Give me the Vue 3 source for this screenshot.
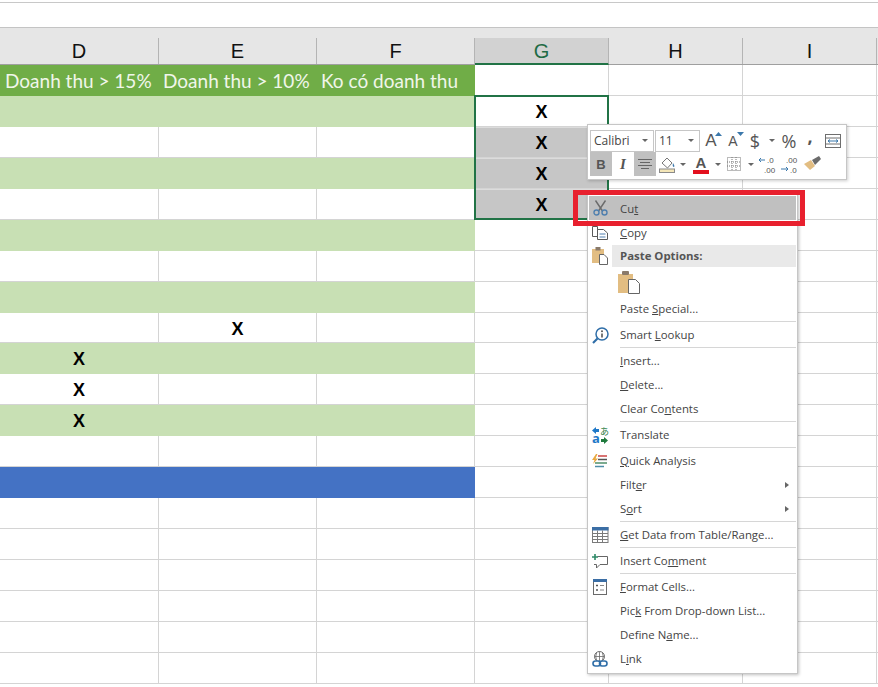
<template>
  <div class="page">
    <div class="topbar"></div>

    <div class="col-heads">
      <div v-for="c in columns" :key="c" class="col-head" :class="{ active: c === 'G' }">{{ c === 'J' ? '' : c }}</div>
    </div>

    <div class="grid">
      <div v-for="(row, r) in rows" :key="r" class="grid-row">
        <div
          v-for="(c, i) in columns"
          :key="c"
          class="cell"
          :class="cellClass(row, c, i)"
        >{{ cellText(row, c) }}</div>
      </div>
    </div>

    <!-- seleccion G2:G5 -->
    <div class="selection"></div>

    <!-- mini toolbar -->
    <div class="mini-bar">
      <div class="mini-row">
        <div class="combo font-name"><span>Calibri</span><i class="caret"></i></div>
        <div class="combo font-size"><span>11</span><i class="caret"></i></div>
        <div class="tool w22"><span class="big-a">A</span><svg width="7" height="5" class="tick"><path d="M0 4 L3.5 0 L7 4Z" fill="#3b78ab"/></svg></div>
        <div class="tool w22"><span class="small-a">A</span><svg width="7" height="5" class="tick"><path d="M0 0 L3.5 4 L7 0Z" fill="#3b78ab"/></svg></div>
        <div class="tool w22 sym">$</div>
        <i class="caret c-dollar"></i>
        <div class="tool w22 sym">%</div>
        <div class="tool w20 sym comma">,</div>
        <div class="tool w22 wrap-btn">
          <svg width="16" height="16" viewBox="0 0 16 16" fill="none" stroke="#6e6e6e"><rect x="0.5" y="1.5" width="15" height="13"/><path d="M0.5 5H15.5M0.5 11H15.5"/><path d="M3 8H13" stroke="#3b78ab"/><path d="M5 6.5L3 8L5 9.5M11 6.5L13 8L11 9.5" stroke="#3b78ab"/></svg>
        </div>
      </div>
      <div class="mini-row">
        <div class="tool btn-on w22 bold-b">B</div>
        <div class="tool w22 ital">I</div>
        <div class="tool btn-on w22">
          <svg width="14" height="12" viewBox="0 0 14 12" stroke="#666"><path d="M0 1.5H14M2 4.5H12M0 7.5H14M3 10.5H11"/></svg>
        </div>
        <div class="tool w22">
          <svg width="17" height="17" viewBox="0 0 17 17" fill="none"><path d="M3 7L8 2L13 7L8.500 12Z" stroke="#777" fill="#fff"/><path d="M14 7Q16 10 15 11Q13 11 14 7Z" fill="#3b78ab"/><rect x="0.500" y="13" width="15" height="3.500" stroke="#8a8a8a" fill="#f4e6b8"/></svg>
        </div>
        <i class="caret c-fill"></i>
        <div class="tool w22 color-a"><span>A</span><b></b></div>
        <i class="caret c-color"></i>
        <div class="tool w22">
          <svg width="14" height="14" viewBox="0 0 14 14" fill="none" stroke="#777" stroke-dasharray="1 1"><rect x="0.500" y="0.500" width="13" height="13"/><path d="M0 5H14M0 9H14M5 0V14M9 0V14"/></svg>
        </div>
        <i class="caret c-border"></i>
        <div class="tool w22">
          <svg width="20" height="19" viewBox="0 0 20 19"><text x="9" y="8" class="dec">.0</text><text x="6" y="17.500" class="dec">.00</text><path d="M7 5H1M3 3L1 5L3 7" fill="none" stroke="#3b78ab"/></svg>
        </div>
        <div class="tool w22">
          <svg width="20" height="19" viewBox="0 0 20 19"><text x="6" y="8" class="dec">.00</text><text x="10" y="17.500" class="dec">.0</text><path d="M1 14H8M6 12L8 14L6 16" fill="none" stroke="#3b78ab"/></svg>
        </div>
        <div class="tool w22 brush">
          <svg width="18" height="16" viewBox="0 0 18 16"><path d="M0 8L7 4L11 10L6 14Z" fill="#e2bd82"/><path d="M8 4L15 0L17 3L11 9Z" fill="#6b6b6b"/></svg>
        </div>
      </div>
    </div>

    <!-- menu contextual -->
    <div class="menu">
      <template v-for="(item, n) in menu" :key="n">
        <div v-if="item.sep" class="sep"></div>
        <div v-else-if="item.header" class="item item-head">
          <span class="ico">
            <svg width="18" height="18" viewBox="0 0 18 18"><rect x="1" y="2" width="12" height="14" fill="#e2bd82"/><rect x="4.500" y="0" width="5" height="3.500" fill="#8a7a6a"/><path d="M8.500 7.500H13L16.500 11V17.500H8.500Z" fill="#fff" stroke="#666"/></svg>
          </span>
          <span class="head-text">{{ item.header }}</span>
        </div>
        <div v-else-if="item.paste" class="item item-paste">
          <svg width="22" height="23" viewBox="0 0 22 23"><rect x="0" y="3" width="15" height="19" fill="#e2bd82"/><rect x="4" y="0" width="7" height="4" rx="1" fill="#8a7a6a"/><path d="M10.500 8.500H17.500L21.500 12.500V22.500H10.500Z" fill="#fff" stroke="#666"/></svg>
        </div>
        <div v-else class="item" :class="{ hot: item.hot }">
          <span class="ico">
            <svg v-if="item.icon === 'cut'" width="15" height="16" viewBox="0 0 15 16" fill="none"><path d="M2.500 0.500L9.500 11M12.500 0.500L5.500 11" stroke="#6b6b6b" stroke-width="1.400"/><circle cx="3.500" cy="12.500" r="2.500" stroke="#4f7fae" stroke-width="1.400"/><circle cx="11.500" cy="12.500" r="2.500" stroke="#4f7fae" stroke-width="1.400"/></svg>
            <svg v-else-if="item.icon === 'copy'" width="16" height="14" viewBox="0 0 16 14" fill="none" stroke="#5a5a5a"><path d="M0.500 0.500H5.500V10.500H0.500Z"/><path d="M5.500 3.500H11.500L15.500 7V13.500H5.500Z" fill="#fff"/><path d="M7.500 8H13.500M7.500 11H13.500" stroke="#4f7fae"/></svg>
            <svg v-else-if="item.icon === 'lookup'" width="17" height="17" viewBox="0 0 17 17" fill="none"><circle cx="10" cy="7" r="6" stroke="#2f6ea8" stroke-width="1.500"/><path d="M5.500 11.500L1 16" stroke="#2f6ea8" stroke-width="2.200"/><path d="M10 6.500V10.500" stroke="#555" stroke-width="1.600"/><circle cx="10" cy="4.300" r="1" fill="#555"/></svg>
            <svg v-else-if="item.icon === 'translate'" width="17" height="17" viewBox="0 0 17 17"><text x="0" y="16" class="tr-a">a</text><text x="8" y="8" class="tr-j">あ</text><path d="M0 3.500L4 0V2H7V5H4V7Z" fill="#1f78c8"/><path d="M16 13.500L12 17V15H9V12H12V10Z" fill="#1f7a3d"/></svg>
            <svg v-else-if="item.icon === 'quick'" width="16" height="14" viewBox="0 0 16 14"><path d="M4 0L0 6H2.500L1 10L6 4.500H3.500L5.500 0Z" fill="#e9a840"/><path d="M6 2H15" stroke="#c44" stroke-width="1.500"/><path d="M6 5.500H15" stroke="#555" stroke-width="1.500"/><path d="M3 9H15" stroke="#4f8f6a" stroke-width="1.500"/><path d="M3 12.500H12" stroke="#4f8fa8" stroke-width="1.500"/></svg>
            <svg v-else-if="item.icon === 'table'" width="17" height="16" viewBox="0 0 17 16" fill="none" stroke="#7a7a7a"><rect x="0.500" y="0.500" width="15.500" height="15" fill="#fff"/><rect x="0" y="0" width="16.500" height="3.500" fill="#3b6ea5" stroke="none"/><path d="M0.500 6.500H16M0.500 9.500H16M0.500 12.500H16M5.500 3.500V15.500M10.500 3.500V15.500"/></svg>
            <svg v-else-if="item.icon === 'comment'" width="16" height="15" viewBox="0 0 16 15" fill="none"><path d="M5.500 2.500H15.500V10.500H8L4.500 14V10.500H2" stroke="#666"/><path d="M0 3H6M3 0V6" stroke="#2f8a68" stroke-width="1.600"/></svg>
            <svg v-else-if="item.icon === 'format'" width="14" height="16" viewBox="0 0 14 16" fill="none"><rect x="0.500" y="0.500" width="13" height="15" stroke="#6a6a6a" fill="#fff"/><rect x="0" y="0" width="14" height="3" fill="#3b6ea5"/><path d="M3 6.500H5M3 11H5" stroke="#555" stroke-width="1.500"/><path d="M7 6.500H11M7 11H11" stroke="#888"/></svg>
            <svg v-else-if="item.icon === 'link'" width="16" height="16" viewBox="0 0 16 16" fill="none"><circle cx="7.500" cy="5.500" r="5" stroke="#6a6a6a"/><path d="M2.500 5.500H12.500M7.500 .5V10.500M4.500 2Q3 5.500 4.500 9M10.500 2Q12 5.500 10.500 9" stroke="#6a6a6a" stroke-width=".8"/><rect x="1" y="10" width="7.500" height="5" rx="2.500" stroke="#2f6ea8" stroke-width="1.600" fill="#fff"/><rect x="7.500" y="10" width="7.500" height="5" rx="2.500" stroke="#2f6ea8" stroke-width="1.600"/></svg>
          </span>
          <span class="label">{{ item.a }}<u>{{ item.u }}</u>{{ item.b }}</span>
          <i v-if="item.sub" class="arrow"></i>
        </div>
      </template>
    </div>

    <!-- recuadro rojo sobre Cut -->
    <div class="red-box"></div>
  </div>
</template>

<script setup>
const columns = ['D', 'E', 'F', 'G', 'H', 'I', 'J']

// Cada fila: tipo de fondo y las X que lleva
const rows = [
  { kind: 'head' },
  { kind: 'band', x: ['G'] },
  { kind: 'plain', x: ['G'], sel: true },
  { kind: 'band', x: ['G'], sel: true },
  { kind: 'plain', x: ['G'], sel: true },
  { kind: 'band' },
  { kind: 'plain' },
  { kind: 'band' },
  { kind: 'plain', x: ['E'] },
  { kind: 'band', x: ['D'] },
  { kind: 'plain', x: ['D'] },
  { kind: 'band', x: ['D'] },
  { kind: 'plain' },
  { kind: 'blue' },
  { kind: 'plain' },
  { kind: 'plain' },
  { kind: 'plain' },
  { kind: 'plain' },
  { kind: 'plain' },
  { kind: 'plain' }
]

const titles = { D: 'Doanh thu > 15%', E: 'Doanh thu > 10%', F: 'Ko có doanh thu' }

const cellClass = (row, c, i) => {
  const painted = i < 3
  return {
    'is-head': painted && row.kind === 'head',
    'is-band': painted && row.kind === 'band',
    'is-blue': painted && row.kind === 'blue',
    'is-sel': row.sel && c === 'G',
    [`col-${c}`]: true
  }
}

const cellText = (row, c) => {
  if (row.kind === 'head') return titles[c] || ''
  return row.x && row.x.includes(c) ? 'X' : ''
}

const menu = [
  { a: 'Cu', u: 't', b: '', icon: 'cut', hot: true },
  { a: '', u: 'C', b: 'opy', icon: 'copy' },
  { header: 'Paste Options:' },
  { paste: true },
  { a: 'Paste ', u: 'S', b: 'pecial...' },
  { sep: true },
  { a: 'Smart ', u: 'L', b: 'ookup', icon: 'lookup' },
  { sep: true },
  { a: '', u: 'I', b: 'nsert...' },
  { a: '', u: 'D', b: 'elete...' },
  { a: 'Clear Co', u: 'n', b: 'tents' },
  { sep: true },
  { a: 'Translate', u: '', b: '', icon: 'translate' },
  { sep: true },
  { a: '', u: 'Q', b: 'uick Analysis', icon: 'quick' },
  { a: 'Filt', u: 'e', b: 'r', sub: true },
  { a: 'S', u: 'o', b: 'rt', sub: true },
  { sep: true },
  { a: '', u: 'G', b: 'et Data from Table/Range...', icon: 'table' },
  { sep: true },
  { a: 'Insert Co', u: 'm', b: 'ment', icon: 'comment' },
  { sep: true },
  { a: '', u: 'F', b: 'ormat Cells...', icon: 'format' },
  { a: 'Pic', u: 'k', b: ' From Drop-down List...' },
  { a: 'Define N', u: 'a', b: 'me...' },
  { a: 'L', u: 'i', b: 'nk', icon: 'link' }
]
</script>

<style>
html, body {
  margin: 0;
  background: #fff;
  overflow: hidden;
}
</style>

<style scoped>
.page {
  position: relative;
  width: 878px;
  height: 687px;
  overflow: hidden;
  background: #fff;
  font-family: "Liberation Sans", Arial, sans-serif;
}

svg {
  overflow: visible;
}

.topbar {
  height: 24px;
  margin-top: 2px;
  border-top: 1px solid #c8c8c8;
}

.col-heads {
  display: flex;
  height: 38px;
  box-sizing: border-box;
  padding: 10px 0 0;
  background: #e6e6e6;
  border-top: 1px solid #c4c4c4;
  border-bottom: 1px solid #9f9f9f;
}

.col-head {
  flex: none;
  width: 134px;
  box-sizing: border-box;
  border-right: 1px solid #b4b4b4;
  text-align: center;
  font-size: 20px;
  line-height: 26px;
  color: #111;
}

.col-head:nth-child(-n+3) {
  width: 158px;
}

.col-head:first-child {
  width: 159px;
}

.col-head.active {
  background: #d2d2d2;
  color: #1f6b45;
  height: 27px;
  border-bottom: 2px solid #217346;
}

.grid-row {
  display: flex;
  height: 30.95px;
}

.cell {
  flex: none;
  width: 134px;
  box-sizing: border-box;
  border-right: 1px solid #d4d4d4;
  border-bottom: 1px solid #d4d4d4;
  text-align: center;
  font-size: 18px;
  font-weight: 700;
  line-height: 32px;
  color: #000;
}

.col-D, .col-E, .col-F {
  width: 158px;
}

.col-D {
  width: 159px;
}

.is-head {
  padding-left: 4px;
  text-align: left;
  background: #70ad47;
  border-color: #70ad47;
  color: #f0f6ea;
  font-family: Lato, "Liberation Sans", sans-serif;
  font-size: 19px;
  font-weight: 400;
  white-space: nowrap;
}

.is-head.col-D {
  padding-left: 5px;
}

.is-band {
  background: #c8e0b4;
  border-color: #c8e0b4;
}

.is-blue {
  background: #4472c4;
  border-color: #4472c4;
}

.is-sel {
  background: #c6c6c6;
  box-shadow: inset 0 1px 0 #dcdcdc;
}

.selection {
  position: absolute;
  left: 474px;
  top: 95px;
  width: 131px;
  height: 121px;
  border: 2px solid #217346;
}

.mini-bar {
  position: absolute;
  left: 587px;
  top: 124px;
  width: 260px;
  height: 56px;
  box-sizing: border-box;
  padding: 4px 2px;
  background: #fff;
  border: 1px solid #c6c6c6;
  box-shadow: 1px 1px 3px rgba(0, 0, 0, 0.2);
}

.mini-row {
  display: flex;
  align-items: center;
  height: 23px;
}

.mini-row + .mini-row {
  height: 24px;
}

.combo {
  flex: none;
  display: flex;
  align-items: center;
  justify-content: space-between;
  box-sizing: border-box;
  height: 22px;
  padding: 0 5px 0 3px;
  border: 1px solid #c6c6c6;
  font-family: "Open Sans", sans-serif;
  font-size: 12px;
  color: #444;
}

.font-name {
  width: 64px;
}

.font-size {
  width: 45px;
  margin-left: 1px;
}

.caret {
  display: block;
  flex: none;
  width: 0;
  height: 0;
  border-left: 3px solid transparent;
  border-right: 3px solid transparent;
  border-top: 3px solid #666;
}

.c-dollar {
  margin: 0 3.5px 0 2.5px;
}

.c-fill {
  margin: 0 4px 0 2px;
}

.c-color {
  margin: 0 2px 0 3px;
}

.c-border {
  margin: 0 3px 0 3px;
}

.tool {
  flex: none;
  display: flex;
  align-items: center;
  justify-content: center;
  position: relative;
  height: 24px;
  color: #555;
}

.w20 { width: 20px; }
.w22 { width: 22px; }

.wrap-btn {
  margin-left: 2px;
}

.brush {
  margin-left: 1px;
}

.big-a {
  font-size: 17px;
}

.small-a {
  font-size: 14px;
}

.tick {
  position: absolute;
  right: 0;
  top: 3px;
}

.sym {
  font-family: "Open Sans", sans-serif;
  font-size: 18px;
}

.comma {
  font-weight: 700;
  padding-bottom: 10px;
  box-sizing: border-box;
}

.btn-on {
  background: #c0c0c0;
}

.bold-b {
  font-weight: 700;
  font-size: 13px;
}

.ital {
  font-family: "Liberation Serif", serif;
  font-style: italic;
  font-weight: 700;
  font-size: 15px;
}

.color-a {
  flex-direction: column;
  font-size: 15px;
  font-weight: 700;
  line-height: 15px;
}

.color-a b {
  display: block;
  width: 16px;
  height: 4px;
  background: #e3101e;
}

.dec {
  font-family: "Liberation Sans", sans-serif;
  font-size: 8px;
  fill: #555;
}

.menu {
  position: absolute;
  left: 587px;
  top: 193px;
  width: 211px;
  height: 481px;
  box-sizing: border-box;
  padding-top: 1px;
  background: #fff;
  border: 1px solid #c6c6c6;
  box-shadow: 1px 1px 3px rgba(0, 0, 0, 0.25);
  font-family: "Open Sans", sans-serif;
  font-size: 11.4px;
  color: #444;
}

.item {
  display: flex;
  align-items: center;
  height: 24px;
}

.item:not(.hot) .label {
  margin-bottom: 2px;
}

.item.hot {
  height: 26px;
  background: #c0c0c0;
  border: 1px solid #fff;
  box-sizing: border-box;
}

.hot .ico {
  width: 23px;
}

.ico {
  flex: none;
  width: 24px;
  margin-right: 8px;
  display: flex;
  align-items: center;
  justify-content: center;
}

.item-head {
  height: 22px;
}

.item-head .ico {
  margin-right: 0;
}

.head-text {
  flex: 1;
  align-self: stretch;
  padding-left: 8px;
  margin-right: 1px;
  background: #e9e9e9;
  font-weight: 700;
  line-height: 22px;
  color: #555;
}

.item-paste {
  height: 30px;
  padding-left: 30px;
  box-sizing: border-box;
}

.label {
  white-space: nowrap;
}

.arrow {
  margin-left: auto;
  margin-right: 8px;
  width: 0;
  height: 0;
  border-top: 3.500px solid transparent;
  border-bottom: 3.500px solid transparent;
  border-left: 4px solid #666;
}

.sep {
  height: 1px;
  margin: 0 1px 1px 32px;
  background: #d6d6d6;
}

.tr-a {
  font-family: "Open Sans", sans-serif;
  font-size: 13px;
  font-weight: 700;
  fill: #1f78c8;
}

.tr-j {
  font-family: "Noto Sans CJK JP", sans-serif;
  font-size: 9px;
  fill: #1f7a3d;
}

.red-box {
  position: absolute;
  left: 573px;
  top: 190px;
  width: 222px;
  height: 26px;
  border: 5px solid #e8202e;
}
</style>
